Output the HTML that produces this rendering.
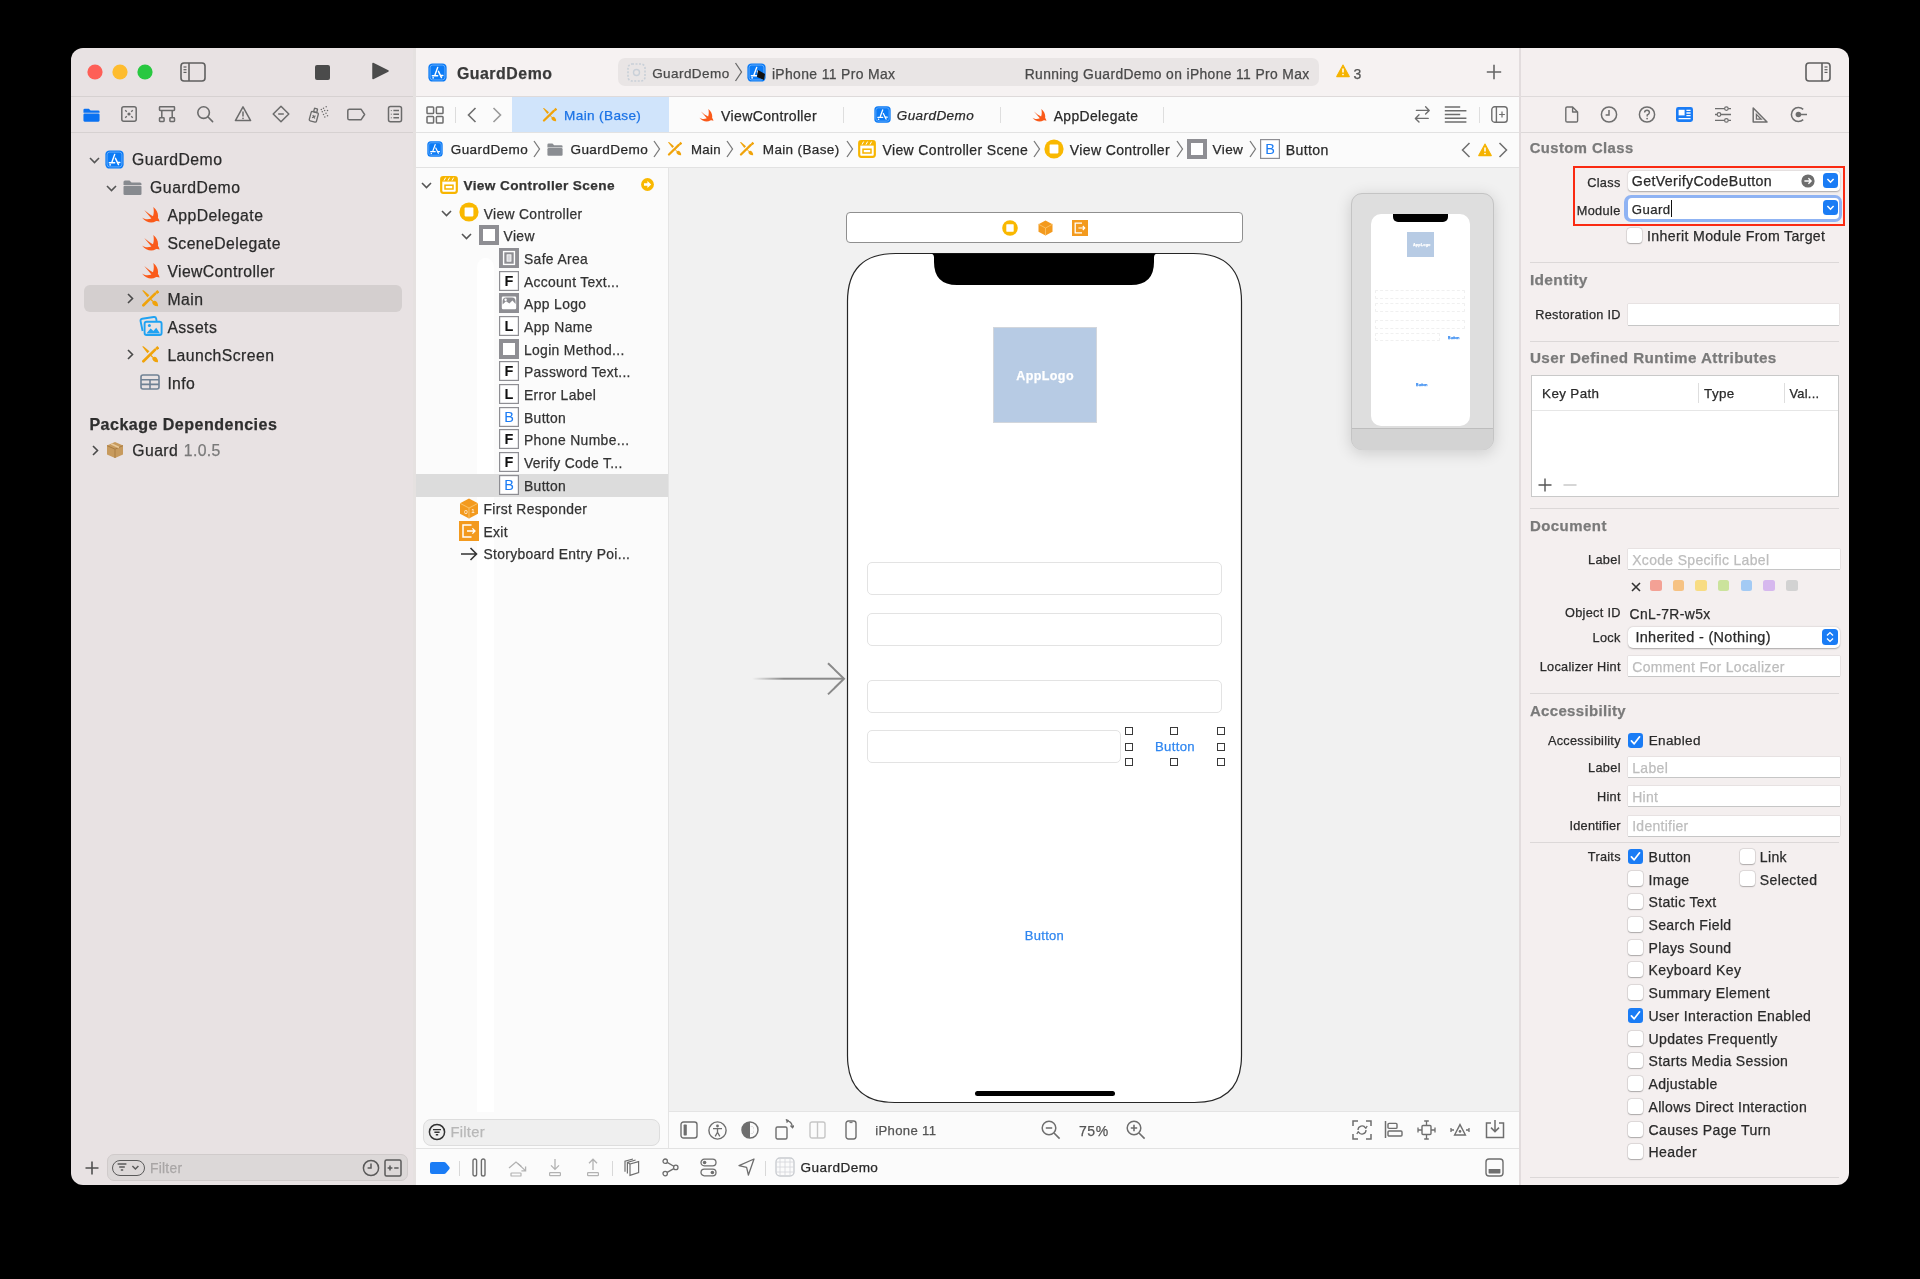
<!DOCTYPE html>
<html><head><meta charset="utf-8"><style>
html,body{margin:0;padding:0;width:1920px;height:1279px;overflow:hidden;background:#000;}
body{font-family:"Liberation Sans",sans-serif;position:relative;}
.a{position:absolute;}
.t{position:absolute;white-space:nowrap;-webkit-text-stroke:0.25px currentColor;}
#win{position:absolute;left:0;top:0;width:1920px;height:1279px;will-change:transform;clip-path:inset(48px 71px 94px 71px round 12px);}
</style></head><body><div id="win">
<div class="a" style="left:71px;top:48px;width:345px;height:1137px;background:#e8e2e3;"></div>
<div class="a" style="left:416px;top:48px;width:1433px;height:48px;background:#f6f2f2;"></div>
<div class="a" style="left:1519px;top:48px;width:330px;height:1137px;background:#f4efef;"></div>
<div class="a" style="left:416px;top:96px;width:1103px;height:1089px;background:#fbfbfb;"></div>
<div class="a" style="left:669px;top:168px;width:850px;height:944px;background:#f1f1f1;"></div>
<div class="a" style="left:71px;top:96px;width:345px;height:1px;background:#d6d1d1;"></div>
<div class="a" style="left:71px;top:132px;width:345px;height:1px;background:#d6d1d1;"></div>
<div class="a" style="left:416px;top:96px;width:1433px;height:1px;background:#dedada;"></div>
<div class="a" style="left:416px;top:132px;width:1103px;height:1px;background:#e2e2e2;"></div>
<div class="a" style="left:416px;top:167px;width:1103px;height:1px;background:#e2e2e2;"></div>
<div class="a" style="left:1519px;top:132px;width:330px;height:1px;background:#dcd8d8;"></div>
<div class="a" style="left:1519px;top:48px;width:2px;height:1137px;background:#e2dcdd;"></div>
<div class="a" style="left:413px;top:48px;width:3px;height:1137px;background:#e5e1e0;"></div>
<div class="a" style="left:668px;top:168px;width:1px;height:980px;background:#e4e4e4;"></div>
<div class="a" style="left:669px;top:1111px;width:850px;height:1px;background:#e4e4e4;"></div>
<div class="a" style="left:416px;top:1148px;width:1103px;height:1px;background:#e2e2e2;"></div>
<svg class="a" style="left:87px;top:64px;" width="16" height="16" viewBox="0 0 16 16"><circle cx="8" cy="8" r="7.6" fill="#fe5f57"/></svg>
<svg class="a" style="left:112px;top:64px;" width="16" height="16" viewBox="0 0 16 16"><circle cx="8" cy="8" r="7.6" fill="#febc2e"/></svg>
<svg class="a" style="left:137px;top:64px;" width="16" height="16" viewBox="0 0 16 16"><circle cx="8" cy="8" r="7.6" fill="#28c840"/></svg>
<svg class="a" style="left:180px;top:62px;" width="26" height="20" viewBox="0 0 26 20"><rect x="1" y="1" width="24" height="18" rx="3" fill="none" stroke="#5f5f5f" stroke-width="1.6"/><line x1="9" y1="1" x2="9" y2="19" stroke="#5f5f5f" stroke-width="1.6"/><line x1="3.5" y1="5" x2="6.5" y2="5" stroke="#5f5f5f" stroke-width="1.2"/><line x1="3.5" y1="7.7" x2="6.5" y2="7.7" stroke="#5f5f5f" stroke-width="1.2"/><line x1="3.5" y1="10.4" x2="6.5" y2="10.4" stroke="#5f5f5f" stroke-width="1.2"/></svg>
<div class="a" style="left:315px;top:65px;width:15px;height:15px;background:#4b4b4b;border-radius:2px;"></div>
<svg class="a" style="left:372px;top:62px;" width="17" height="18" viewBox="0 0 17 18"><path d="M1 1.5 L16 9 L1 16.5 Z" fill="#4b4b4b" stroke="#4b4b4b" stroke-width="1.5" stroke-linejoin="round"/></svg>
<svg class="a" style="left:428px;top:63px;" width="19" height="19" viewBox="0 0 20 20"><rect x="0.4" y="0.4" width="19.2" height="19.2" rx="4.4" fill="#0b7bf6"/><rect x="2.2" y="2.2" width="15.6" height="15.6" rx="2.8" fill="none" stroke="#7ab6fb" stroke-width="0.8"/><g stroke="#fff" stroke-width="1.5" stroke-linecap="round" fill="none"><path d="M10.2 4.6 L7.4 12.4"/><path d="M4.6 13.4 H10.2"/><path d="M11 8.8 L14.2 15.4"/><path d="M13.4 13.2 H15.6"/></g><circle cx="5.4" cy="15.6" r="0.9" fill="#fff"/></svg>
<div class="t" style="left:456.90px;top:63.00px;font-size:15.89px;line-height:21px;color:#3a3a3a;font-weight:bold;letter-spacing:0.532px;">GuardDemo</div>
<div class="a" style="left:618px;top:58px;width:701px;height:28px;background:#e9e5e5;border-radius:7px;"></div>
<svg class="a" style="left:627px;top:63px;" width="19" height="19" viewBox="0 0 19 19"><rect x="1" y="1" width="17" height="17" rx="4" fill="none" stroke="#c9d0d8" stroke-width="1.6" stroke-dasharray="2 1.5"/><circle cx="9.5" cy="9.5" r="3" fill="none" stroke="#c9d0d8" stroke-width="1.4"/></svg>
<div class="t" style="left:652.20px;top:65.00px;font-size:13.50px;line-height:18px;color:#4a4a4a;letter-spacing:0.43px;">GuardDemo</div>
<svg class="a" style="left:734px;top:62px;" width="9" height="20" viewBox="0 0 9 20"><path d="M1.5 1 L7.5 10 L1.5 19" fill="none" stroke="#6a6a6a" stroke-width="1.3"/></svg>
<svg class="a" style="left:747px;top:63px;" width="19" height="19" viewBox="0 0 20 20"><rect x="0.4" y="0.4" width="19.2" height="19.2" rx="4.4" fill="#0b7bf6"/><rect x="2.2" y="2.2" width="15.6" height="15.6" rx="2.8" fill="none" stroke="#7ab6fb" stroke-width="0.8"/><g stroke="#fff" stroke-width="1.5" stroke-linecap="round" fill="none"><path d="M10.2 4.6 L7.4 12.4"/><path d="M4.6 13.4 H10.2"/><path d="M11 8.8 L14.2 15.4"/><path d="M13.4 13.2 H15.6"/></g><circle cx="5.4" cy="15.6" r="0.9" fill="#fff"/></svg>
<svg class="a" style="left:755px;top:68px;" width="13" height="14" viewBox="0 0 13 14"><path d="M3 2 L10 6 L9 12 L2 9 Z" fill="#111"/></svg>
<div class="t" style="left:771.90px;top:65.00px;font-size:13.93px;line-height:18px;color:#4a4a4a;letter-spacing:0.364px;">iPhone 11 Pro Max</div>
<div class="t" style="left:1024.70px;top:65.00px;font-size:13.85px;line-height:18px;color:#4a4a4a;letter-spacing:0.375px;">Running GuardDemo on iPhone 11 Pro Max</div>
<svg class="a" style="left:1336px;top:64px;" width="14" height="14" viewBox="0 0 20 20"><path d="M10 1.5 L19 18 H1 Z" fill="#f5b300" stroke="#f5b300" stroke-width="1.5" stroke-linejoin="round"/><path d="M10 6.5 V12" stroke="#fff" stroke-width="2.2"/><circle cx="10" cy="15" r="1.2" fill="#fff"/></svg>
<div class="t" style="left:1353.60px;top:65.00px;font-size:14.00px;line-height:18px;color:#555;">3</div>
<svg class="a" style="left:1486px;top:64px;" width="16" height="16" viewBox="0 0 16 16"><path d="M8 0.8 V15.2 M0.8 8 H15.2" stroke="#666" stroke-width="1.6"/></svg>
<svg class="a" style="left:1805px;top:62px;" width="26" height="20" viewBox="0 0 26 20"><rect x="1" y="1" width="24" height="18" rx="3" fill="none" stroke="#5f5f5f" stroke-width="1.6"/><line x1="17" y1="1" x2="17" y2="19" stroke="#5f5f5f" stroke-width="1.6"/><line x1="19.5" y1="5" x2="22.5" y2="5" stroke="#5f5f5f" stroke-width="1.2"/><line x1="19.5" y1="7.7" x2="22.5" y2="7.7" stroke="#5f5f5f" stroke-width="1.2"/><line x1="19.5" y1="10.4" x2="22.5" y2="10.4" stroke="#5f5f5f" stroke-width="1.2"/></svg>
<svg class="a" style="left:83px;top:108px;" width="17" height="14" viewBox="0 0 19 15"><path d="M0.5 2 Q0.5 0.5 2 0.5 H6.5 L8.5 2.5 H17 Q18.5 2.5 18.5 4 V5 H0.5 Z" fill="#0a72f2"/><rect x="0.5" y="5.8" width="18" height="9.2" rx="1.3" fill="#0a72f2"/></svg>
<svg class="a" style="left:120px;top:105px;" width="18" height="18" viewBox="0 0 18 18"><rect x="1.8" y="1.8" width="14.4" height="14.4" rx="2" fill="none" stroke="#6b6b6b" stroke-width="1.5"/><circle cx="9" cy="9" r="1.6" fill="#6b6b6b"/><path d="M5.2 5.2 L6.8 6.8 M12.8 5.2 L11.2 6.8 M5.2 12.8 L6.8 11.2 M12.8 12.8 L11.2 11.2" stroke="#6b6b6b" stroke-width="1.3"/></svg>
<svg class="a" style="left:158px;top:105px;" width="18" height="18" viewBox="0 0 18 18"><g fill="none" stroke="#6b6b6b" stroke-width="1.5"><rect x="1.5" y="1.8" width="15" height="3.6" rx="0.6"/><rect x="1.5" y="12.8" width="4.6" height="3.6" rx="0.6"/><rect x="11.9" y="12.8" width="4.6" height="3.6" rx="0.6"/><path d="M3.8 5.4 V12.8 M14.2 5.4 V12.8"/></g></svg>
<svg class="a" style="left:196px;top:105px;" width="18" height="18" viewBox="0 0 18 18"><g fill="none" stroke="#6b6b6b" stroke-width="1.6"><circle cx="7.6" cy="7.6" r="5.8"/><path d="M11.8 11.8 L16.6 16.6" stroke-linecap="round"/></g></svg>
<svg class="a" style="left:234px;top:105px;" width="18" height="18" viewBox="0 0 18 18"><path d="M9 1.8 L16.6 15.6 H1.4 Z" fill="none" stroke="#6b6b6b" stroke-width="1.5" stroke-linejoin="round"/><path d="M9 6.6 V11.4" stroke="#6b6b6b" stroke-width="1.5"/><circle cx="9" cy="13.4" r="0.8" fill="#6b6b6b"/></svg>
<svg class="a" style="left:272px;top:105px;" width="18" height="18" viewBox="0 0 18 18"><path d="M9 1.2 L16.8 9 L9 16.8 L1.2 9 Z" fill="none" stroke="#6b6b6b" stroke-width="1.5" stroke-linejoin="round"/><path d="M6.2 9 H11.8" stroke="#6b6b6b" stroke-width="1.5"/></svg>
<svg class="a" style="left:308px;top:105px;" width="22" height="19" viewBox="0 0 22 19"><g transform="rotate(15 5.8 11.8)" fill="none" stroke="#6b6b6b" stroke-width="1.3"><rect x="2.1" y="7" width="7.4" height="9.6" rx="1.2"/><rect x="4.3" y="3.2" width="3.2" height="3.8" rx="0.6"/><path d="M4.4 10.4 L7.2 13.2 M7.2 10.4 L4.4 13.2" stroke-width="1.2"/></g><g fill="#6b6b6b"><circle cx="13.3" cy="4.4" r="0.75"/><circle cx="15.5" cy="3.2" r="0.75"/><circle cx="18.2" cy="1.8" r="0.75"/><circle cx="16.6" cy="5.6" r="0.75"/><circle cx="19.5" cy="5.6" r="0.75"/><circle cx="14.3" cy="6.8" r="0.75"/><circle cx="18" cy="8.2" r="0.75"/><circle cx="15.5" cy="9.5" r="0.75"/><circle cx="19.5" cy="10.8" r="0.75"/><circle cx="16.8" cy="12.1" r="0.75"/></g></svg>
<svg class="a" style="left:346px;top:108px;" width="20" height="13" viewBox="0 0 20 13"><path d="M1.8 2.8 Q1.8 1.2 3.4 1.2 H15 L18.6 6.5 L15 11.8 H3.4 Q1.8 11.8 1.8 10.2 Z" fill="none" stroke="#6b6b6b" stroke-width="1.5" stroke-linejoin="round"/></svg>
<svg class="a" style="left:387px;top:105px;" width="16" height="18" viewBox="0 0 16 18"><rect x="1.5" y="1.6" width="13" height="15.2" rx="2" fill="none" stroke="#6b6b6b" stroke-width="1.5"/><path d="M6.4 5.6 H12 M6.4 9.2 H12 M6.4 12.8 H12" stroke="#6b6b6b" stroke-width="1.5"/><path d="M3.8 5.6 H4.8 M3.8 9.2 H4.8 M3.8 12.8 H4.8" stroke="#6b6b6b" stroke-width="1"/></svg>
<div class="a" style="left:84px;top:285px;width:318px;height:27px;background:#d4cfcf;border-radius:6px;"></div>
<svg class="a" style="left:88.5px;top:157px;" width="11" height="7" viewBox="0 0 11 7"><path d="M1 1 L5.5 5.5 L10 1" fill="none" stroke="#555555" stroke-width="1.6"/></svg>
<svg class="a" style="left:105px;top:150px;" width="19" height="19" viewBox="0 0 20 20"><rect x="0.4" y="0.4" width="19.2" height="19.2" rx="4.4" fill="#0b7bf6"/><rect x="2.2" y="2.2" width="15.6" height="15.6" rx="2.8" fill="none" stroke="#7ab6fb" stroke-width="0.8"/><g stroke="#fff" stroke-width="1.5" stroke-linecap="round" fill="none"><path d="M10.2 4.6 L7.4 12.4"/><path d="M4.6 13.4 H10.2"/><path d="M11 8.8 L14.2 15.4"/><path d="M13.4 13.2 H15.6"/></g><circle cx="5.4" cy="15.6" r="0.9" fill="#fff"/></svg>
<div class="t" style="left:132.10px;top:149.00px;font-size:15.77px;line-height:21px;color:#2b2b2b;letter-spacing:0.502px;">GuardDemo</div>
<svg class="a" style="left:106px;top:185px;" width="11" height="7" viewBox="0 0 11 7"><path d="M1 1 L5.5 5.5 L10 1" fill="none" stroke="#555555" stroke-width="1.6"/></svg>
<svg class="a" style="left:123px;top:180px;" width="19" height="15" viewBox="0 0 19 15"><path d="M0.5 2 Q0.5 0.5 2 0.5 H6.5 L8.5 2.5 H17 Q18.5 2.5 18.5 4 V5 H0.5 Z" fill="#878a8f"/><rect x="0.5" y="5.8" width="18" height="9.2" rx="1.3" fill="#878a8f"/></svg>
<div class="t" style="left:150.10px;top:177.00px;font-size:15.77px;line-height:21px;color:#2b2b2b;letter-spacing:0.502px;">GuardDemo</div>
<svg class="a" style="left:142px;top:207px;" width="18" height="16" viewBox="0 0 18 16"><path d="M0 10.4 C2.5 12.4 6 12.8 9.4 11.4 L2.2 3 C5.2 5.6 8.2 7.8 11 9.2 C12 6.4 12 3 11.3 0 C15 3 16.6 7 15.9 10.8 C16.7 11.9 17.3 13.1 17.6 14.6 C16.2 14 14.9 13.8 13.7 14.2 C10 16.4 4 15.8 0 10.4 Z" fill="#fa5a1a"/></svg>
<div class="t" style="left:167.40px;top:205.00px;font-size:15.77px;line-height:21px;color:#2b2b2b;letter-spacing:0.436px;">AppDelegate</div>
<svg class="a" style="left:142px;top:235px;" width="18" height="16" viewBox="0 0 18 16"><path d="M0 10.4 C2.5 12.4 6 12.8 9.4 11.4 L2.2 3 C5.2 5.6 8.2 7.8 11 9.2 C12 6.4 12 3 11.3 0 C15 3 16.6 7 15.9 10.8 C16.7 11.9 17.3 13.1 17.6 14.6 C16.2 14 14.9 13.8 13.7 14.2 C10 16.4 4 15.8 0 10.4 Z" fill="#fa5a1a"/></svg>
<div class="t" style="left:167.40px;top:233.00px;font-size:15.77px;line-height:21px;color:#2b2b2b;letter-spacing:0.437px;">SceneDelegate</div>
<svg class="a" style="left:142px;top:263px;" width="18" height="16" viewBox="0 0 18 16"><path d="M0 10.4 C2.5 12.4 6 12.8 9.4 11.4 L2.2 3 C5.2 5.6 8.2 7.8 11 9.2 C12 6.4 12 3 11.3 0 C15 3 16.6 7 15.9 10.8 C16.7 11.9 17.3 13.1 17.6 14.6 C16.2 14 14.9 13.8 13.7 14.2 C10 16.4 4 15.8 0 10.4 Z" fill="#fa5a1a"/></svg>
<div class="t" style="left:167.40px;top:261.00px;font-size:15.77px;line-height:21px;color:#2b2b2b;letter-spacing:0.384px;">ViewController</div>
<svg class="a" style="left:126.5px;top:292.5px;" width="7" height="11" viewBox="0 0 7 11"><path d="M1 1 L5.5 5.5 L1 10" fill="none" stroke="#4a4a4a" stroke-width="1.6"/></svg>
<svg class="a" style="left:141px;top:289px;" width="18" height="18" viewBox="0 0 18 18"><path d="M2.4 16.2 L14.2 4.6" stroke="#f0a30a" stroke-width="2.7" stroke-linecap="round"/><rect x="14.9" y="1.6" width="2.8" height="2.8" fill="#f0a30a" transform="rotate(45 16.3 3)"/><path d="M1.2 1.6 Q2 0.9 2.8 1.5 L8.4 6.2 L6.4 8.3 Z" fill="#f0a30a"/><path d="M8.6 9.2 L11.8 12.2" stroke="#f0a30a" stroke-width="1.2"/><path d="M11.4 12.6 Q13.6 10.8 15.6 12.8 Q17.4 15 17 17.2 Q14.4 17.4 12.6 16 Q10.8 14.4 11.4 12.6 Z" fill="#f0a30a"/></svg>
<div class="t" style="left:167.40px;top:289.00px;font-size:15.77px;line-height:21px;color:#2b2b2b;letter-spacing:0.45px;">Main</div>
<svg class="a" style="left:139px;top:316px;" width="24" height="20" viewBox="0 0 24 20"><path d="M3.6 15 L1.6 5.2 Q1.2 3.2 3.2 2.8 L14.8 1 Q16.8 0.7 17.2 2.6 L17.6 5" fill="none" stroke="#1fa2f2" stroke-width="1.9"/><rect x="5.6" y="5.8" width="17" height="13.2" rx="2" fill="#e8e2e3" stroke="#1fa2f2" stroke-width="1.9"/><path d="M7.4 17.4 L11.6 12.6 L14.4 15 L17.2 11.8 L21 17.4 Z" fill="#1fa2f2"/><circle cx="10.4" cy="9.6" r="1.5" fill="#1fa2f2"/></svg>
<div class="t" style="left:167.40px;top:317.00px;font-size:15.77px;line-height:21px;color:#2b2b2b;letter-spacing:0.415px;">Assets</div>
<svg class="a" style="left:126.5px;top:348.5px;" width="7" height="11" viewBox="0 0 7 11"><path d="M1 1 L5.5 5.5 L1 10" fill="none" stroke="#4a4a4a" stroke-width="1.6"/></svg>
<svg class="a" style="left:141px;top:345px;" width="18" height="18" viewBox="0 0 18 18"><path d="M2.4 16.2 L14.2 4.6" stroke="#f0a30a" stroke-width="2.7" stroke-linecap="round"/><rect x="14.9" y="1.6" width="2.8" height="2.8" fill="#f0a30a" transform="rotate(45 16.3 3)"/><path d="M1.2 1.6 Q2 0.9 2.8 1.5 L8.4 6.2 L6.4 8.3 Z" fill="#f0a30a"/><path d="M8.6 9.2 L11.8 12.2" stroke="#f0a30a" stroke-width="1.2"/><path d="M11.4 12.6 Q13.6 10.8 15.6 12.8 Q17.4 15 17 17.2 Q14.4 17.4 12.6 16 Q10.8 14.4 11.4 12.6 Z" fill="#f0a30a"/></svg>
<div class="t" style="left:167.40px;top:345.00px;font-size:15.77px;line-height:21px;color:#2b2b2b;letter-spacing:0.446px;">LaunchScreen</div>
<svg class="a" style="left:140px;top:374px;" width="20" height="16" viewBox="0 0 20 16"><g fill="none" stroke="#6f8194" stroke-width="1.6"><rect x="1" y="1" width="18" height="14" rx="2"/><path d="M1 5.8 H19 M1 10.4 H19 M10 5.8 V15"/></g></svg>
<div class="t" style="left:167.40px;top:373.00px;font-size:15.77px;line-height:21px;color:#2b2b2b;letter-spacing:0.346px;">Info</div>
<div class="t" style="left:89.40px;top:414.00px;font-size:16.07px;line-height:21px;color:#2e2e2e;font-weight:bold;letter-spacing:0.47px;">Package Dependencies</div>
<svg class="a" style="left:91.5px;top:445px;" width="7" height="11" viewBox="0 0 7 11"><path d="M1 1 L5.5 5.5 L1 10" fill="none" stroke="#4a4a4a" stroke-width="1.6"/></svg>
<svg class="a" style="left:106px;top:441px;" width="18" height="18" viewBox="0 0 18 18"><path d="M9 1 L17 4.6 V13.4 L9 17 L1 13.4 V4.6 Z" fill="#c79a5d"/><path d="M1 4.6 L9 8.2 L17 4.6 M9 8.2 V17" fill="none" stroke="#a97c43" stroke-width="1"/><path d="M5 2.8 L13 6.4" stroke="#e8c99a" stroke-width="1.6"/></svg>
<div class="t" style="left:132.20px;top:440.00px;font-size:15.77px;line-height:21px;color:#2b2b2b;letter-spacing:0.461px;">Guard</div>
<div class="t" style="left:183.80px;top:440.00px;font-size:15.77px;line-height:21px;color:#7a7a7a;letter-spacing:0.369px;">1.0.5</div>
<svg class="a" style="left:85px;top:1161px;" width="14" height="14" viewBox="0 0 14 14"><path d="M7 0.5 V13.5 M0.5 7 H13.5" stroke="#505050" stroke-width="1.6"/></svg>
<div class="a" style="left:107px;top:1154px;width:301px;height:27px;background:#dcd8d8;border:1px solid #d0cbcb;box-sizing:border-box;border-radius:7px;"></div>
<div class="a" style="left:112px;top:1159.5px;width:33px;height:16.5px;border:1.4px solid #5a5a5a;box-sizing:border-box;border-radius:9px;"></div>
<svg class="a" style="left:116px;top:1161px;" width="26" height="13" viewBox="0 0 26 13"><path d="M1.6 3 H10.4 M3.2 6 H8.8 M4.8 9 H7.2" stroke="#5a5a5a" stroke-width="1.4"/><path d="M16.4 5 L19.4 8 L22.4 5" fill="none" stroke="#5a5a5a" stroke-width="1.5"/></svg>
<div class="t" style="left:150.00px;top:1159.00px;font-size:13.81px;line-height:18px;color:#a9a6a6;letter-spacing:0.269px;">Filter</div>
<svg class="a" style="left:362px;top:1159px;" width="18" height="18" viewBox="0 0 18 18"><circle cx="9" cy="9" r="7.6" fill="none" stroke="#5a5a5a" stroke-width="1.5"/><path d="M9 4.4 V9 H5.6" fill="none" stroke="#5a5a5a" stroke-width="1.5"/></svg>
<svg class="a" style="left:384px;top:1159px;" width="18" height="18" viewBox="0 0 18 18"><rect x="1" y="1" width="16" height="16" rx="1.5" fill="none" stroke="#5a5a5a" stroke-width="1.5"/><path d="M3.6 9 H8.4 M6 6.6 V11.4 M10.2 9 H14.6" stroke="#5a5a5a" stroke-width="1.5"/></svg>
<svg class="a" style="left:426px;top:106px;" width="18" height="18" viewBox="0 0 18 18"><g fill="none" stroke="#6e6e6e" stroke-width="1.5"><rect x="1" y="1" width="6.6" height="6.6" rx="0.8"/><rect x="10.4" y="1" width="6.6" height="6.6" rx="0.8"/><rect x="1" y="10.4" width="6.6" height="6.6" rx="0.8"/><rect x="10.4" y="10.4" width="6.6" height="6.6" rx="0.8"/></g></svg>
<div class="a" style="left:455px;top:107px;width:1px;height:16px;background:#dcdcdc;"></div>
<svg class="a" style="left:467px;top:107px;" width="10" height="16" viewBox="0 0 10 16"><path d="M8.5 1 L1.5 8 L8.5 15" fill="none" stroke="#6e6e6e" stroke-width="1.6"/></svg>
<svg class="a" style="left:492px;top:107px;" width="10" height="16" viewBox="0 0 10 16"><path d="M1.5 1 L8.5 8 L1.5 15" fill="none" stroke="#9a9a9a" stroke-width="1.6"/></svg>
<div class="a" style="left:512px;top:97px;width:157px;height:35px;background:#d0e4fb;"></div>
<svg class="a" style="left:542px;top:107px;" width="15" height="15" viewBox="0 0 18 18"><path d="M2.4 16.2 L14.2 4.6" stroke="#f0a30a" stroke-width="2.7" stroke-linecap="round"/><rect x="14.9" y="1.6" width="2.8" height="2.8" fill="#f0a30a" transform="rotate(45 16.3 3)"/><path d="M1.2 1.6 Q2 0.9 2.8 1.5 L8.4 6.2 L6.4 8.3 Z" fill="#f0a30a"/><path d="M8.6 9.2 L11.8 12.2" stroke="#f0a30a" stroke-width="1.2"/><path d="M11.4 12.6 Q13.6 10.8 15.6 12.8 Q17.4 15 17 17.2 Q14.4 17.4 12.6 16 Q10.8 14.4 11.4 12.6 Z" fill="#f0a30a"/></svg>
<div class="t" style="left:564.10px;top:107.00px;font-size:13.60px;line-height:18px;color:#1b73e6;letter-spacing:0.351px;">Main (Base)</div>
<svg class="a" style="left:699px;top:109px;" width="15" height="13" viewBox="0 0 18 16"><path d="M0 10.4 C2.5 12.4 6 12.8 9.4 11.4 L2.2 3 C5.2 5.6 8.2 7.8 11 9.2 C12 6.4 12 3 11.3 0 C15 3 16.6 7 15.9 10.8 C16.7 11.9 17.3 13.1 17.6 14.6 C16.2 14 14.9 13.8 13.7 14.2 C10 16.4 4 15.8 0 10.4 Z" fill="#fa5a1a"/></svg>
<div class="t" style="left:721.10px;top:107.00px;font-size:14.06px;line-height:18px;color:#2a2a2a;letter-spacing:0.343px;">ViewController</div>
<div class="a" style="left:843px;top:107px;width:1px;height:16px;background:#dedede;"></div>
<svg class="a" style="left:874px;top:106px;" width="17" height="17" viewBox="0 0 20 20"><rect x="0.4" y="0.4" width="19.2" height="19.2" rx="4.4" fill="#0b7bf6"/><rect x="2.2" y="2.2" width="15.6" height="15.6" rx="2.8" fill="none" stroke="#7ab6fb" stroke-width="0.8"/><g stroke="#fff" stroke-width="1.5" stroke-linecap="round" fill="none"><path d="M10.2 4.6 L7.4 12.4"/><path d="M4.6 13.4 H10.2"/><path d="M11 8.8 L14.2 15.4"/><path d="M13.4 13.2 H15.6"/></g><circle cx="5.4" cy="15.6" r="0.9" fill="#fff"/></svg>
<div class="t" style="left:896.70px;top:107.00px;font-size:13.53px;line-height:18px;color:#2a2a2a;font-style:italic;letter-spacing:0.431px;">GuardDemo</div>
<div class="a" style="left:1000px;top:107px;width:1px;height:16px;background:#dedede;"></div>
<svg class="a" style="left:1032px;top:109px;" width="15" height="13" viewBox="0 0 18 16"><path d="M0 10.4 C2.5 12.4 6 12.8 9.4 11.4 L2.2 3 C5.2 5.6 8.2 7.8 11 9.2 C12 6.4 12 3 11.3 0 C15 3 16.6 7 15.9 10.8 C16.7 11.9 17.3 13.1 17.6 14.6 C16.2 14 14.9 13.8 13.7 14.2 C10 16.4 4 15.8 0 10.4 Z" fill="#fa5a1a"/></svg>
<div class="t" style="left:1053.70px;top:107.00px;font-size:13.90px;line-height:18px;color:#2a2a2a;letter-spacing:0.385px;">AppDelegate</div>
<div class="a" style="left:1163px;top:107px;width:1px;height:16px;background:#dedede;"></div>
<svg class="a" style="left:1413px;top:105px;" width="19" height="19" viewBox="0 0 19 19"><g fill="none" stroke="#6e6e6e" stroke-width="1.4" stroke-linecap="round" stroke-linejoin="round"><path d="M3.4 5.4 H16.2 M12.6 1.8 L16.2 5.4 L12.6 9"/><path d="M15.2 13.4 H2.4 M6 9.8 L2.4 13.4 L6 17"/></g></svg>
<svg class="a" style="left:1444px;top:106px;" width="23" height="17" viewBox="0 0 23 17"><path d="M0.8 1 H16.2 M0.8 4.8 H22.4 M0.8 8.5 H16.2 M0.8 12.3 H22.4 M0.8 16 H22.4" stroke="#6e6e6e" stroke-width="1.4"/></svg>
<div class="a" style="left:1479px;top:107px;width:1px;height:16px;background:#dedede;"></div>
<svg class="a" style="left:1491px;top:106px;" width="17" height="17" viewBox="0 0 17 17"><rect x="0.8" y="0.8" width="15.4" height="15.4" rx="2.8" fill="none" stroke="#6e6e6e" stroke-width="1.4"/><path d="M5.4 0.8 V16.2" stroke="#6e6e6e" stroke-width="1.4"/><path d="M11 5.6 V11.4 M8.1 8.5 H13.9" stroke="#6e6e6e" stroke-width="1.2"/></svg>
<svg class="a" style="left:427px;top:141px;" width="16" height="16" viewBox="0 0 20 20"><rect x="0.4" y="0.4" width="19.2" height="19.2" rx="4.4" fill="#0b7bf6"/><rect x="2.2" y="2.2" width="15.6" height="15.6" rx="2.8" fill="none" stroke="#7ab6fb" stroke-width="0.8"/><g stroke="#fff" stroke-width="1.5" stroke-linecap="round" fill="none"><path d="M10.2 4.6 L7.4 12.4"/><path d="M4.6 13.4 H10.2"/><path d="M11 8.8 L14.2 15.4"/><path d="M13.4 13.2 H15.6"/></g><circle cx="5.4" cy="15.6" r="0.9" fill="#fff"/></svg>
<div class="t" style="left:450.70px;top:141.00px;font-size:13.52px;line-height:18px;color:#2a2a2a;letter-spacing:0.431px;">GuardDemo</div>
<svg class="a" style="left:533px;top:140px;" width="8" height="18" viewBox="0 0 8 18"><path d="M1 1 L6.5 9 L1 17" fill="none" stroke="#7a7a7a" stroke-width="1.3"/></svg>
<svg class="a" style="left:547px;top:143px;" width="16" height="13" viewBox="0 0 19 15"><path d="M0.5 2 Q0.5 0.5 2 0.5 H6.5 L8.5 2.5 H17 Q18.5 2.5 18.5 4 V5 H0.5 Z" fill="#8a8d92"/><rect x="0.5" y="5.8" width="18" height="9.2" rx="1.3" fill="#8a8d92"/></svg>
<div class="t" style="left:570.40px;top:141.00px;font-size:13.59px;line-height:18px;color:#2a2a2a;letter-spacing:0.433px;">GuardDemo</div>
<svg class="a" style="left:653px;top:140px;" width="8" height="18" viewBox="0 0 8 18"><path d="M1 1 L6.5 9 L1 17" fill="none" stroke="#7a7a7a" stroke-width="1.3"/></svg>
<svg class="a" style="left:667px;top:141px;" width="15" height="15" viewBox="0 0 18 18"><path d="M2.4 16.2 L14.2 4.6" stroke="#f0a30a" stroke-width="2.7" stroke-linecap="round"/><rect x="14.9" y="1.6" width="2.8" height="2.8" fill="#f0a30a" transform="rotate(45 16.3 3)"/><path d="M1.2 1.6 Q2 0.9 2.8 1.5 L8.4 6.2 L6.4 8.3 Z" fill="#f0a30a"/><path d="M8.6 9.2 L11.8 12.2" stroke="#f0a30a" stroke-width="1.2"/><path d="M11.4 12.6 Q13.6 10.8 15.6 12.8 Q17.4 15 17 17.2 Q14.4 17.4 12.6 16 Q10.8 14.4 11.4 12.6 Z" fill="#f0a30a"/></svg>
<div class="t" style="left:690.90px;top:141.00px;font-size:13.24px;line-height:17px;color:#2a2a2a;letter-spacing:0.377px;">Main</div>
<svg class="a" style="left:725.5px;top:140px;" width="8" height="18" viewBox="0 0 8 18"><path d="M1 1 L6.5 9 L1 17" fill="none" stroke="#7a7a7a" stroke-width="1.3"/></svg>
<svg class="a" style="left:739px;top:141px;" width="15" height="15" viewBox="0 0 18 18"><path d="M2.4 16.2 L14.2 4.6" stroke="#f0a30a" stroke-width="2.7" stroke-linecap="round"/><rect x="14.9" y="1.6" width="2.8" height="2.8" fill="#f0a30a" transform="rotate(45 16.3 3)"/><path d="M1.2 1.6 Q2 0.9 2.8 1.5 L8.4 6.2 L6.4 8.3 Z" fill="#f0a30a"/><path d="M8.6 9.2 L11.8 12.2" stroke="#f0a30a" stroke-width="1.2"/><path d="M11.4 12.6 Q13.6 10.8 15.6 12.8 Q17.4 15 17 17.2 Q14.4 17.4 12.6 16 Q10.8 14.4 11.4 12.6 Z" fill="#f0a30a"/></svg>
<div class="t" style="left:762.80px;top:141.00px;font-size:13.53px;line-height:18px;color:#2a2a2a;letter-spacing:0.349px;">Main (Base)</div>
<svg class="a" style="left:846px;top:140px;" width="8" height="18" viewBox="0 0 8 18"><path d="M1 1 L6.5 9 L1 17" fill="none" stroke="#7a7a7a" stroke-width="1.3"/></svg>
<svg class="a" style="left:858px;top:140px;" width="18" height="18" viewBox="0 0 18 18"><rect x="1.2" y="1.2" width="15.6" height="15.6" rx="2" fill="#fff" stroke="#f7b500" stroke-width="2.2"/><rect x="1" y="1" width="16" height="4.6" fill="#f7b500"/><path d="M4 4.6 L5.6 1.6 M8 4.6 L9.6 1.6 M12 4.6 L13.6 1.6" stroke="#fff" stroke-width="1"/><rect x="5" y="9.2" width="8" height="3.8" fill="none" stroke="#f7b500" stroke-width="1.5"/></svg>
<div class="t" style="left:882.60px;top:141.00px;font-size:14.01px;line-height:18px;color:#2a2a2a;letter-spacing:0.347px;">View Controller Scene</div>
<svg class="a" style="left:1032.5px;top:140px;" width="8" height="18" viewBox="0 0 8 18"><path d="M1 1 L6.5 9 L1 17" fill="none" stroke="#7a7a7a" stroke-width="1.3"/></svg>
<svg class="a" style="left:1044px;top:139px;" width="20" height="20" viewBox="0 0 20 20"><circle cx="10" cy="10" r="9.6" fill="#f9b800"/><rect x="5.6" y="5.6" width="8.8" height="8.8" rx="0.8" fill="#fff"/></svg>
<div class="t" style="left:1069.80px;top:141.00px;font-size:14.09px;line-height:18px;color:#2a2a2a;letter-spacing:0.334px;">View Controller</div>
<svg class="a" style="left:1176px;top:140px;" width="8" height="18" viewBox="0 0 8 18"><path d="M1 1 L6.5 9 L1 17" fill="none" stroke="#7a7a7a" stroke-width="1.3"/></svg>
<svg class="a" style="left:1187px;top:139px;" width="20" height="20" viewBox="0 0 20 20"><rect x="0" y="0" width="20" height="20" fill="#8e8e93"/><rect x="4" y="4" width="12" height="12" fill="#fff"/></svg>
<div class="t" style="left:1212.60px;top:141.00px;font-size:13.57px;line-height:18px;color:#2a2a2a;letter-spacing:0.384px;">View</div>
<svg class="a" style="left:1248.5px;top:140px;" width="8" height="18" viewBox="0 0 8 18"><path d="M1 1 L6.5 9 L1 17" fill="none" stroke="#7a7a7a" stroke-width="1.3"/></svg>
<svg class="a" style="left:1260px;top:139px;" width="20" height="20" viewBox="0 0 20 20"><rect x="0.6" y="0.6" width="18.8" height="18.8" fill="#fff" stroke="#8e8e93" stroke-width="1.2"/><text x="10" y="15.4" text-anchor="middle" font-family="Liberation Sans" font-size="14.5" font-weight="normal" fill="#1a7cf5">B</text></svg>
<div class="t" style="left:1285.70px;top:141.00px;font-size:14.13px;line-height:18px;color:#2a2a2a;letter-spacing:0.358px;">Button</div>
<svg class="a" style="left:1461px;top:142px;" width="10" height="16" viewBox="0 0 10 16"><path d="M8.5 1 L1.5 8 L8.5 15" fill="none" stroke="#6e6e6e" stroke-width="1.5"/></svg>
<svg class="a" style="left:1478px;top:143px;" width="14" height="14" viewBox="0 0 20 20"><path d="M10 1.5 L19 18 H1 Z" fill="#f5b300" stroke="#f5b300" stroke-width="1.5" stroke-linejoin="round"/><path d="M10 6.5 V12" stroke="#fff" stroke-width="2.2"/><circle cx="10" cy="15" r="1.2" fill="#fff"/></svg>
<svg class="a" style="left:1498px;top:142px;" width="10" height="16" viewBox="0 0 10 16"><path d="M1.5 1 L8.5 8 L1.5 15" fill="none" stroke="#6e6e6e" stroke-width="1.5"/></svg>
<div class="a" style="left:477px;top:258px;width:17px;height:854px;background:#ffffff;border-radius:9px 9px 0 0;"></div>
<div class="a" style="left:416px;top:474px;width:252px;height:23px;background:#dcdcdc;"></div>
<svg class="a" style="left:421px;top:182px;" width="11" height="7" viewBox="0 0 11 7"><path d="M1 1 L5.5 5.5 L10 1" fill="none" stroke="#555555" stroke-width="1.6"/></svg>
<svg class="a" style="left:440px;top:176px;" width="18" height="18" viewBox="0 0 18 18"><rect x="1.2" y="1.2" width="15.6" height="15.6" rx="2" fill="#fff" stroke="#f7b500" stroke-width="2.2"/><rect x="1" y="1" width="16" height="4.6" fill="#f7b500"/><path d="M4 4.6 L5.6 1.6 M8 4.6 L9.6 1.6 M12 4.6 L13.6 1.6" stroke="#fff" stroke-width="1"/><rect x="5" y="9.2" width="8" height="3.8" fill="none" stroke="#f7b500" stroke-width="1.5"/></svg>
<div class="t" style="left:463.50px;top:177.00px;font-size:13.65px;line-height:18px;color:#333;font-weight:bold;letter-spacing:0.361px;">View Controller Scene</div>
<svg class="a" style="left:641px;top:178px;" width="13" height="13" viewBox="0 0 13 13"><circle cx="6.5" cy="6.5" r="6.4" fill="#f9b800"/><path d="M3 5.2 H6.4 V3 L10.2 6.5 L6.4 10 V7.8 H3 Z" fill="#fff"/></svg>
<svg class="a" style="left:441px;top:210px;" width="11" height="7" viewBox="0 0 11 7"><path d="M1 1 L5.5 5.5 L10 1" fill="none" stroke="#555555" stroke-width="1.6"/></svg>
<svg class="a" style="left:459px;top:202px;" width="20" height="20" viewBox="0 0 20 20"><circle cx="10" cy="10" r="9.6" fill="#f9b800"/><rect x="5.6" y="5.6" width="8.8" height="8.8" rx="0.8" fill="#fff"/></svg>
<div class="t" style="left:483.75px;top:205.00px;font-size:13.87px;line-height:18px;color:#333333;letter-spacing:0.329px;">View Controller</div>
<svg class="a" style="left:461px;top:233px;" width="11" height="7" viewBox="0 0 11 7"><path d="M1 1 L5.5 5.5 L10 1" fill="none" stroke="#555555" stroke-width="1.6"/></svg>
<svg class="a" style="left:479px;top:225px;" width="20" height="20" viewBox="0 0 20 20"><rect x="0" y="0" width="20" height="20" fill="#8e8e93"/><rect x="4" y="4" width="12" height="12" fill="#fff"/></svg>
<div class="t" style="left:503.50px;top:227.00px;font-size:13.87px;line-height:18px;color:#333333;letter-spacing:0.392px;">View</div>
<svg class="a" style="left:499px;top:248px;" width="20" height="20" viewBox="0 0 20 20"><rect width="20" height="20" fill="#8e8e93"/><rect x="4.6" y="3.6" width="10.8" height="12.8" fill="none" stroke="#fff" stroke-width="1.4"/><rect x="8" y="6.8" width="4" height="6.4" fill="#d8d8dc" stroke="#fff" stroke-width="0.8"/></svg>
<div class="t" style="left:524.00px;top:250.00px;font-size:13.87px;line-height:18px;color:#333333;letter-spacing:0.356px;">Safe Area</div>
<svg class="a" style="left:499px;top:271px;" width="20" height="20" viewBox="0 0 20 20"><rect x="0.6" y="0.6" width="18.8" height="18.8" fill="#fff" stroke="#8e8e93" stroke-width="1.2"/><text x="10" y="15.4" text-anchor="middle" font-family="Liberation Sans" font-size="14.5" font-weight="bold" fill="#111">F</text></svg>
<div class="t" style="left:524.00px;top:273.00px;font-size:13.87px;line-height:18px;color:#333333;letter-spacing:0.318px;">Account Text...</div>
<svg class="a" style="left:499px;top:293px;" width="20" height="20" viewBox="0 0 20 20"><rect width="20" height="20" fill="#8e8e93"/><rect x="2.8" y="3.6" width="14.4" height="12.6" rx="1.2" fill="#fff"/><path d="M3.6 11.6 L7 8.2 L10.4 10.6 L13.4 7.6 L16.6 11 V8.4 Q16.6 4.4 13 4.4 H7 Q3.6 4.4 3.6 8.4 Z" fill="#8e8e93"/><circle cx="6.6" cy="6.8" r="1.2" fill="#fff"/></svg>
<div class="t" style="left:524.00px;top:295.00px;font-size:13.87px;line-height:18px;color:#333333;letter-spacing:0.391px;">App Logo</div>
<svg class="a" style="left:499px;top:316px;" width="20" height="20" viewBox="0 0 20 20"><rect x="0.6" y="0.6" width="18.8" height="18.8" fill="#fff" stroke="#8e8e93" stroke-width="1.2"/><text x="10" y="15.4" text-anchor="middle" font-family="Liberation Sans" font-size="14.5" font-weight="bold" fill="#111">L</text></svg>
<div class="t" style="left:524.00px;top:318.00px;font-size:13.87px;line-height:18px;color:#333333;letter-spacing:0.431px;">App Name</div>
<svg class="a" style="left:499px;top:339px;" width="20" height="20" viewBox="0 0 20 20"><rect x="0" y="0" width="20" height="20" fill="#8e8e93"/><rect x="4" y="4" width="12" height="12" fill="#fff"/></svg>
<div class="t" style="left:524.00px;top:341.00px;font-size:13.87px;line-height:18px;color:#333333;letter-spacing:0.335px;">Login Method...</div>
<svg class="a" style="left:499px;top:361px;" width="20" height="20" viewBox="0 0 20 20"><rect x="0.6" y="0.6" width="18.8" height="18.8" fill="#fff" stroke="#8e8e93" stroke-width="1.2"/><text x="10" y="15.4" text-anchor="middle" font-family="Liberation Sans" font-size="14.5" font-weight="bold" fill="#111">F</text></svg>
<div class="t" style="left:524.00px;top:363.00px;font-size:13.87px;line-height:18px;color:#333333;letter-spacing:0.334px;">Password Text...</div>
<svg class="a" style="left:499px;top:384px;" width="20" height="20" viewBox="0 0 20 20"><rect x="0.6" y="0.6" width="18.8" height="18.8" fill="#fff" stroke="#8e8e93" stroke-width="1.2"/><text x="10" y="15.4" text-anchor="middle" font-family="Liberation Sans" font-size="14.5" font-weight="bold" fill="#111">L</text></svg>
<div class="t" style="left:524.00px;top:386.00px;font-size:13.87px;line-height:18px;color:#333333;letter-spacing:0.328px;">Error Label</div>
<svg class="a" style="left:499px;top:407px;" width="20" height="20" viewBox="0 0 20 20"><rect x="0.6" y="0.6" width="18.8" height="18.8" fill="#fff" stroke="#8e8e93" stroke-width="1.2"/><text x="10" y="15.4" text-anchor="middle" font-family="Liberation Sans" font-size="14.5" font-weight="normal" fill="#1a7cf5">B</text></svg>
<div class="t" style="left:524.00px;top:409.00px;font-size:13.87px;line-height:18px;color:#333333;letter-spacing:0.352px;">Button</div>
<svg class="a" style="left:499px;top:429px;" width="20" height="20" viewBox="0 0 20 20"><rect x="0.6" y="0.6" width="18.8" height="18.8" fill="#fff" stroke="#8e8e93" stroke-width="1.2"/><text x="10" y="15.4" text-anchor="middle" font-family="Liberation Sans" font-size="14.5" font-weight="bold" fill="#111">F</text></svg>
<div class="t" style="left:524.00px;top:431.00px;font-size:13.87px;line-height:18px;color:#333333;letter-spacing:0.377px;">Phone Numbe...</div>
<svg class="a" style="left:499px;top:452px;" width="20" height="20" viewBox="0 0 20 20"><rect x="0.6" y="0.6" width="18.8" height="18.8" fill="#fff" stroke="#8e8e93" stroke-width="1.2"/><text x="10" y="15.4" text-anchor="middle" font-family="Liberation Sans" font-size="14.5" font-weight="bold" fill="#111">F</text></svg>
<div class="t" style="left:524.00px;top:454.00px;font-size:13.87px;line-height:18px;color:#333333;letter-spacing:0.309px;">Verify Code T...</div>
<svg class="a" style="left:499px;top:475px;" width="20" height="20" viewBox="0 0 20 20"><rect x="0.6" y="0.6" width="18.8" height="18.8" fill="#fff" stroke="#8e8e93" stroke-width="1.2"/><text x="10" y="15.4" text-anchor="middle" font-family="Liberation Sans" font-size="14.5" font-weight="normal" fill="#1a7cf5">B</text></svg>
<div class="t" style="left:524.00px;top:477.00px;font-size:13.87px;line-height:18px;color:#333333;letter-spacing:0.352px;">Button</div>
<svg class="a" style="left:459px;top:498px;" width="20" height="21" viewBox="0 0 20 21"><path d="M10 0.6 L19 5.3 V15.7 L10 20.4 L1 15.7 V5.3 Z" fill="#f39a1e"/><path d="M1 5.3 L10 10 L19 5.3 M10 10 V20.4" fill="none" stroke="#fbc66f" stroke-width="0.9"/><text x="5.2" y="16" font-size="6" font-family="Liberation Sans" fill="#fff">0</text><text x="12.2" y="15" font-size="6" font-family="Liberation Sans" fill="#fff">1</text></svg>
<div class="t" style="left:483.50px;top:500.00px;font-size:13.87px;line-height:18px;color:#333333;letter-spacing:0.346px;">First Responder</div>
<svg class="a" style="left:459px;top:521px;" width="20" height="20" viewBox="0 0 20 20"><rect width="20" height="20" fill="#f39a1e"/><path d="M12.5 4 H4 V16 H12.5" fill="none" stroke="#fff" stroke-width="1.5"/><path d="M8 10 H16 M13.4 7.4 L16 10 L13.4 12.6" fill="none" stroke="#fff" stroke-width="1.3"/></svg>
<div class="t" style="left:483.50px;top:523.00px;font-size:13.87px;line-height:18px;color:#333333;letter-spacing:0.304px;">Exit</div>
<svg class="a" style="left:460px;top:547px;" width="18" height="14" viewBox="0 0 18 14"><path d="M1 7 H16.5 M10.5 1 L16.5 7 L10.5 13" fill="none" stroke="#333" stroke-width="1.6"/></svg>
<div class="t" style="left:483.50px;top:545.00px;font-size:13.87px;line-height:18px;color:#333333;letter-spacing:0.319px;">Storyboard Entry Poi...</div>
<div class="a" style="left:423px;top:1119px;width:237px;height:27px;background:#efefef;border:1px solid #dddddd;box-sizing:border-box;border-radius:8px;"></div>
<svg class="a" style="left:428px;top:1123px;" width="18" height="18" viewBox="0 0 18 18"><circle cx="9" cy="9" r="7.6" fill="none" stroke="#333" stroke-width="1.5"/><path d="M5 6.6 H13 M6.4 9.2 H11.6 M7.8 11.8 H10.2" stroke="#333" stroke-width="1.4"/></svg>
<div class="t" style="left:450.40px;top:1123.00px;font-size:14.72px;line-height:19px;color:#b8b8b8;letter-spacing:0.287px;">Filter</div>
<div class="a" style="left:846px;top:212px;width:397px;height:31px;background:#ffffff;border:1px solid #8f8f8f;box-sizing:border-box;border-radius:4px;"></div>
<svg class="a" style="left:1002px;top:220px;" width="16" height="16" viewBox="0 0 16 16"><circle cx="8" cy="8" r="7.8" fill="#f9b800"/><rect x="4.3" y="4.3" width="7.4" height="7.4" rx="0.6" fill="#fff"/></svg>
<svg class="a" style="left:1038px;top:220px;" width="15" height="16" viewBox="0 0 15 16"><path d="M7.5 0.5 L14.5 4.2 V11.8 L7.5 15.5 L0.5 11.8 V4.2 Z" fill="#f39a1e"/><path d="M0.5 4.2 L7.5 8 L14.5 4.2 M7.5 8 V15.5" fill="none" stroke="#fbc66f" stroke-width="0.8"/></svg>
<svg class="a" style="left:1072px;top:220px;" width="16" height="16" viewBox="0 0 16 16"><rect width="16" height="16" fill="#f39a1e"/><path d="M10 3.2 H3.2 V12.8 H10" fill="none" stroke="#fff" stroke-width="1.3"/><path d="M6.4 8 H12.8 M10.8 6 L12.8 8 L10.8 10" fill="none" stroke="#fff" stroke-width="1.1"/></svg>
<svg class="a" style="left:846px;top:252px;" width="397" height="852" viewBox="0 0 397 852"><path d="M49.5 1.5 H347.5 Q395.5 1.5 395.5 49.5 V803.5 Q395.5 850.5 348.5 850.5 H48.5 Q1.5 850.5 1.5 803.5 V49.5 Q1.5 1.5 49.5 1.5 Z" fill="#fff" stroke="#262626" stroke-width="1.2"/><path d="M84 1.5 Q88 1.5 88 5.5 V10 Q88 33 111 33 H285 Q308 33 308 10 V5.5 Q308 1.5 312 1.5 Z" fill="#000"/></svg>
<div class="a" style="left:993px;top:327px;width:104px;height:96px;background:#b7cbe4;border:1px solid #d2d6dc;box-sizing:border-box;"></div>
<div class="t" style="left:1016.20px;top:368.00px;font-size:12.52px;line-height:16px;color:#ffffff;font-weight:bold;letter-spacing:0.413px;">AppLogo</div>
<div class="a" style="left:867px;top:562px;width:355px;height:33px;background:#fff;border:1px solid #e3e3e3;box-sizing:border-box;border-radius:5px;"></div>
<div class="a" style="left:867px;top:613px;width:355px;height:33px;background:#fff;border:1px solid #e3e3e3;box-sizing:border-box;border-radius:5px;"></div>
<div class="a" style="left:867px;top:680px;width:355px;height:33px;background:#fff;border:1px solid #e3e3e3;box-sizing:border-box;border-radius:5px;"></div>
<div class="a" style="left:867px;top:730px;width:254px;height:33px;background:#fff;border:1px solid #e3e3e3;box-sizing:border-box;border-radius:5px;"></div>
<div class="a" style="left:1125.2px;top:727.0px;width:8px;height:8px;border:1.3px solid #3a3a3a;background:#fff;box-sizing:border-box;"></div>
<div class="a" style="left:1125.2px;top:743.2px;width:8px;height:8px;border:1.3px solid #3a3a3a;background:#fff;box-sizing:border-box;"></div>
<div class="a" style="left:1125.2px;top:758.1px;width:8px;height:8px;border:1.3px solid #3a3a3a;background:#fff;box-sizing:border-box;"></div>
<div class="a" style="left:1170.2px;top:727.0px;width:8px;height:8px;border:1.3px solid #3a3a3a;background:#fff;box-sizing:border-box;"></div>
<div class="a" style="left:1170.2px;top:758.1px;width:8px;height:8px;border:1.3px solid #3a3a3a;background:#fff;box-sizing:border-box;"></div>
<div class="a" style="left:1216.8px;top:727.0px;width:8px;height:8px;border:1.3px solid #3a3a3a;background:#fff;box-sizing:border-box;"></div>
<div class="a" style="left:1216.8px;top:743.2px;width:8px;height:8px;border:1.3px solid #3a3a3a;background:#fff;box-sizing:border-box;"></div>
<div class="a" style="left:1216.8px;top:758.1px;width:8px;height:8px;border:1.3px solid #3a3a3a;background:#fff;box-sizing:border-box;"></div>
<div class="t" style="left:1155.00px;top:738.00px;font-size:13.14px;line-height:17px;color:#2f86f0;letter-spacing:0.333px;">Button</div>
<div class="t" style="left:1024.70px;top:927.00px;font-size:12.98px;line-height:17px;color:#2f86f0;letter-spacing:0.329px;">Button</div>
<div class="a" style="left:975px;top:1091px;width:140px;height:5px;background:#000;border-radius:3px;"></div>
<svg class="a" style="left:750px;top:662px;" width="98" height="34" viewBox="0 0 98 34"><defs><linearGradient id="ag" x1="0" x2="1"><stop offset="0" stop-color="#8a8a8a" stop-opacity="0"/><stop offset="0.35" stop-color="#8a8a8a"/><stop offset="1" stop-color="#8a8a8a"/></linearGradient></defs><rect x="2" y="15.7" width="91" height="2" fill="url(#ag)"/><path d="M78 1.2 L94 16.7 L78 32.4" fill="none" stroke="#8a8a8a" stroke-width="2"/></svg>
<div class="a" style="left:1351px;top:193px;width:143px;height:257px;background:#dedede;border:1px solid #c4c4c4;box-sizing:border-box;border-radius:11px;box-shadow:0 3px 16px rgba(0,0,0,0.16);"></div>
<div class="a" style="left:1352px;top:428px;width:141px;height:21px;background:#d3d3d3;border-top:1px solid #bdbdbd;border-radius:0 0 10px 10px;"></div>
<div class="a" style="left:1371px;top:214px;width:99px;height:212px;background:#fff;border-radius:10px;"></div>
<div class="a" style="left:1393px;top:214px;width:55px;height:8px;background:#000;border-radius:0 0 5px 5px;"></div>
<div class="a" style="left:1407px;top:232px;width:27px;height:25px;background:#b7cbe4;"></div>
<div class="t" style="left:1413.00px;top:243.00px;font-size:3.80px;line-height:5px;color:#ffffff;font-weight:bold;letter-spacing:0.125px;">AppLogo</div>
<div class="a" style="left:1375px;top:290px;width:90px;height:9px;background:#fff;border:1px dashed #f0f0f0;box-sizing:border-box;border-radius:1px;"></div>
<div class="a" style="left:1375px;top:303px;width:90px;height:9px;background:#fff;border:1px dashed #f0f0f0;box-sizing:border-box;border-radius:1px;"></div>
<div class="a" style="left:1375px;top:320px;width:90px;height:9px;background:#fff;border:1px dashed #f0f0f0;box-sizing:border-box;border-radius:1px;"></div>
<div class="a" style="left:1375px;top:333px;width:65px;height:8px;background:#fff;border:1px dashed #f0f0f0;box-sizing:border-box;border-radius:1px;"></div>
<div class="t" style="left:1448.00px;top:336.00px;font-size:3.80px;line-height:5px;color:#2f86f0;letter-spacing:0.096px;">Button</div>
<div class="t" style="left:1416.00px;top:383.00px;font-size:3.80px;line-height:5px;color:#2f86f0;letter-spacing:0.096px;">Button</div>
<svg class="a" style="left:680px;top:1121px;" width="18" height="18" viewBox="0 0 18 18"><rect x="1" y="1" width="16" height="16" rx="2.5" fill="none" stroke="#6e6e6e" stroke-width="1.4"/><rect x="3.6" y="3.6" width="3.2" height="10.8" rx="0.6" fill="#6e6e6e"/></svg>
<svg class="a" style="left:708px;top:1121px;" width="19" height="19" viewBox="0 0 19 19"><circle cx="9.5" cy="9.5" r="8.6" fill="none" stroke="#6e6e6e" stroke-width="1.4"/><circle cx="9.5" cy="5" r="1.4" fill="#6e6e6e"/><path d="M5 7.6 H14 M9.5 7.6 V11.2 L7.2 15.4 M9.5 11.2 L11.8 15.4" fill="none" stroke="#6e6e6e" stroke-width="1.3"/></svg>
<svg class="a" style="left:741px;top:1121px;" width="18" height="18" viewBox="0 0 18 18"><circle cx="9" cy="9" r="8" fill="none" stroke="#6e6e6e" stroke-width="1.5"/><path d="M9 1 A8 8 0 0 0 9 17 Z" fill="#6e6e6e"/><circle cx="9" cy="9" r="4" fill="#6e6e6e"/><path d="M9 5 A4 4 0 0 1 9 13 Z" fill="#fbfbfb"/></svg>
<svg class="a" style="left:775px;top:1119px;" width="19" height="21" viewBox="0 0 19 21"><rect x="1" y="8" width="11" height="12" rx="1.5" fill="none" stroke="#6e6e6e" stroke-width="1.4"/><path d="M11 1.5 Q17 2 17.5 8.5 M15.4 6.6 L17.5 8.8 L19 6.4 M10.8 0.5 L13.2 1.6 L11.6 3.6" fill="none" stroke="#6e6e6e" stroke-width="1.3"/></svg>
<svg class="a" style="left:809px;top:1121px;" width="17" height="18" viewBox="0 0 17 18"><rect x="1" y="1" width="15" height="16" rx="2" fill="none" stroke="#c6c6c6" stroke-width="1.4"/><path d="M8.5 1 V17" stroke="#c6c6c6" stroke-width="1.4"/></svg>
<svg class="a" style="left:845px;top:1120px;" width="12" height="20" viewBox="0 0 12 20"><rect x="1" y="1" width="10" height="18" rx="2.4" fill="none" stroke="#6e6e6e" stroke-width="1.4"/><path d="M4.5 2.6 H7.5" stroke="#6e6e6e" stroke-width="1"/></svg>
<div class="t" style="left:875.20px;top:1122.00px;font-size:13.12px;line-height:17px;color:#555555;letter-spacing:0.34px;">iPhone 11</div>
<svg class="a" style="left:1041px;top:1120px;" width="20" height="20" viewBox="0 0 20 20"><circle cx="8" cy="8" r="6.8" fill="none" stroke="#6e6e6e" stroke-width="1.5"/><path d="M4.8 8 H11.2 M13 13 L18.6 18.6" stroke="#6e6e6e" stroke-width="1.6"/></svg>
<div class="t" style="left:1079.10px;top:1122.00px;font-size:14.00px;line-height:18px;color:#555555;letter-spacing:0.492px;">75%</div>
<svg class="a" style="left:1126px;top:1120px;" width="20" height="20" viewBox="0 0 20 20"><circle cx="8" cy="8" r="6.8" fill="none" stroke="#6e6e6e" stroke-width="1.5"/><path d="M4.8 8 H11.2 M8 4.8 V11.2 M13 13 L18.6 18.6" stroke="#6e6e6e" stroke-width="1.6"/></svg>
<svg class="a" style="left:1352px;top:1120px;" width="20" height="20" viewBox="0 0 20 20"><path d="M1 6 V1 H6 M14 1 H19 V6 M19 14 V19 H14 M6 19 H1 V14" fill="none" stroke="#6e6e6e" stroke-width="1.5"/><path d="M6 10 A4 4 0 0 1 13.5 8 M14 10 A4 4 0 0 1 6.5 12 M12 6.6 L13.8 8.2 L15.2 6 M8 13.4 L6.2 11.8 L4.8 14" fill="none" stroke="#6e6e6e" stroke-width="1.3"/></svg>
<svg class="a" style="left:1384px;top:1120px;" width="19" height="19" viewBox="0 0 19 19"><path d="M1.5 1 V18" stroke="#6e6e6e" stroke-width="1.5"/><rect x="4" y="3.4" width="9" height="5" rx="1" fill="none" stroke="#6e6e6e" stroke-width="1.4"/><rect x="4" y="11" width="14" height="5" rx="1" fill="none" stroke="#6e6e6e" stroke-width="1.4"/></svg>
<svg class="a" style="left:1417px;top:1120px;" width="19" height="20" viewBox="0 0 19 20"><rect x="5" y="5.5" width="9" height="9" rx="1" fill="none" stroke="#6e6e6e" stroke-width="1.4"/><path d="M9.5 1 V5.5 M9.5 14.5 V19 M1 10 H5 M14 10 H18 M1 7.6 V12.4 M18 7.6 V12.4 M7.2 1 H11.8 M7.2 19 H11.8" stroke="#6e6e6e" stroke-width="1.3"/></svg>
<svg class="a" style="left:1450px;top:1120px;" width="20" height="19" viewBox="0 0 20 19"><path d="M10 4.6 L15.4 15 H4.6 Z" fill="none" stroke="#6e6e6e" stroke-width="1.4"/><path d="M1 10 H4 M16 10 H19 M1 8 V12 M19 8 V12" stroke="#6e6e6e" stroke-width="1.3"/><circle cx="10" cy="11.4" r="1.3" fill="#6e6e6e"/></svg>
<svg class="a" style="left:1485px;top:1119px;" width="20" height="20" viewBox="0 0 20 20"><path d="M6 4 H1.5 V18.5 H18.5 V4 H14" fill="none" stroke="#6e6e6e" stroke-width="1.5"/><path d="M10 1 V12.5 M6 8.6 L10 12.6 L14 8.6" fill="none" stroke="#6e6e6e" stroke-width="1.5"/></svg>
<svg class="a" style="left:430px;top:1162px;" width="20" height="12" viewBox="0 0 20 12"><path d="M2 0 H14 Q15.2 0 16 1 L19.4 5 Q20 6 19.4 7 L16 11 Q15.2 12 14 12 H2 Q0 12 0 10 V2 Q0 0 2 0 Z" fill="#1a7cf5"/></svg>
<div class="a" style="left:459px;top:1161px;width:1px;height:15px;background:#d8d8d8;"></div>
<svg class="a" style="left:472px;top:1158px;" width="14" height="19" viewBox="0 0 14 19"><rect x="1" y="1" width="3.6" height="17" rx="1.8" fill="none" stroke="#6e6e6e" stroke-width="1.4"/><rect x="9.4" y="1" width="3.6" height="17" rx="1.8" fill="none" stroke="#6e6e6e" stroke-width="1.4"/></svg>
<svg class="a" style="left:508px;top:1159px;" width="19" height="18" viewBox="0 0 19 18"><path d="M1 9 L8 3 L13.4 7.4" fill="none" stroke="#b2b2b2" stroke-width="1.3"/><path d="M10 4.6 L17.4 11.6 M17.6 7.6 V11.8 H13.4" fill="none" stroke="#b2b2b2" stroke-width="1.3"/><rect x="3" y="14" width="10" height="3" rx="0.6" fill="none" stroke="#b2b2b2" stroke-width="1.2"/></svg>
<svg class="a" style="left:548px;top:1158px;" width="14" height="19" viewBox="0 0 14 19"><path d="M7 1 V11 M3 7.4 L7 11.4 L11 7.4" fill="none" stroke="#b2b2b2" stroke-width="1.3"/><rect x="1.6" y="14.6" width="10.8" height="3" rx="0.6" fill="none" stroke="#b2b2b2" stroke-width="1.2"/></svg>
<svg class="a" style="left:586px;top:1158px;" width="14" height="19" viewBox="0 0 14 19"><path d="M7 12 V1.4 M3 5.2 L7 1.2 L11 5.2" fill="none" stroke="#b2b2b2" stroke-width="1.3"/><rect x="1.6" y="14.6" width="10.8" height="3" rx="0.6" fill="none" stroke="#b2b2b2" stroke-width="1.2"/></svg>
<div class="a" style="left:612px;top:1161px;width:1px;height:15px;background:#d8d8d8;"></div>
<svg class="a" style="left:624px;top:1158px;" width="16" height="19" viewBox="0 0 16 19"><g fill="none" stroke="#6e6e6e" stroke-width="1.2"><path d="M6 6 L14.6 3.6 V14.6 L6 17.4 Z"/><path d="M6 6 L3.6 4.6 M3.4 15.6 V4.4 L11.6 2 M1 13.8 V3.2 L9 1"/></g></svg>
<svg class="a" style="left:662px;top:1158px;" width="17" height="19" viewBox="0 0 17 19"><g fill="none" stroke="#6e6e6e" stroke-width="1.3"><circle cx="3.2" cy="3.2" r="2.2"/><circle cx="3.2" cy="15.6" r="2.2"/><circle cx="13.8" cy="9.4" r="2.2"/><path d="M5.2 4.4 L11.8 8.2 M5.2 14.4 L11.8 10.6"/></g></svg>
<svg class="a" style="left:700px;top:1158px;" width="17" height="19" viewBox="0 0 17 19"><g fill="none" stroke="#6e6e6e" stroke-width="1.3"><rect x="1" y="1.2" width="15" height="6.6" rx="3.3"/><rect x="1" y="11.2" width="15" height="6.6" rx="3.3"/></g><circle cx="4.6" cy="4.5" r="1.8" fill="#6e6e6e"/><circle cx="12.4" cy="14.5" r="1.8" fill="#6e6e6e"/></svg>
<svg class="a" style="left:738px;top:1158px;" width="17" height="18" viewBox="0 0 17 18"><path d="M16 1 L1 7.6 L8.6 9.4 L10.4 17 Z" fill="none" stroke="#6e6e6e" stroke-width="1.3" stroke-linejoin="round"/></svg>
<div class="a" style="left:765px;top:1161px;width:1px;height:15px;background:#d8d8d8;"></div>
<svg class="a" style="left:775px;top:1157px;" width="20" height="20" viewBox="0 0 20 20"><rect x="1" y="1" width="18" height="18" rx="4" fill="none" stroke="#c9ccd0" stroke-width="1.4"/><path d="M5 1 V19 M10 1 V19 M15 1 V19 M1 5 H19 M1 10 H19 M1 15 H19" stroke="#d4d6da" stroke-width="0.8"/></svg>
<div class="t" style="left:800.50px;top:1159.00px;font-size:13.59px;line-height:18px;color:#2a2a2a;letter-spacing:0.433px;">GuardDemo</div>
<svg class="a" style="left:1485px;top:1158px;" width="19" height="19" viewBox="0 0 19 19"><rect x="1" y="1" width="17" height="17" rx="3" fill="none" stroke="#6e6e6e" stroke-width="1.4"/><rect x="3.6" y="11" width="11.8" height="4.4" rx="0.6" fill="#6e6e6e"/></svg>
<svg class="a" style="left:1564px;top:106px;" width="15" height="17" viewBox="0 0 15 17"><path d="M1.8 2.4 Q1.8 1 3.2 1 H8.6 L13.6 6 V14.8 Q13.6 16 12.4 16 H3.2 Q1.8 16 1.8 14.8 Z M8.6 1 V6 H13.6" fill="none" stroke="#6e6e6e" stroke-width="1.4" stroke-linejoin="round"/></svg>
<svg class="a" style="left:1600px;top:106px;" width="18" height="17" viewBox="0 0 18 17"><circle cx="9" cy="8.5" r="7.6" fill="none" stroke="#6e6e6e" stroke-width="1.5"/><path d="M9 4 V9 H5.6" fill="none" stroke="#6e6e6e" stroke-width="1.5"/></svg>
<svg class="a" style="left:1638px;top:106px;" width="18" height="17" viewBox="0 0 18 17"><circle cx="9" cy="8.5" r="7.6" fill="none" stroke="#6e6e6e" stroke-width="1.5"/><path d="M6.6 6.6 Q6.6 4.2 9 4.2 Q11.4 4.2 11.4 6.4 Q11.4 8 9.2 9 V10.6" fill="none" stroke="#6e6e6e" stroke-width="1.4"/><circle cx="9.1" cy="12.6" r="0.9" fill="#6e6e6e"/></svg>
<svg class="a" style="left:1676px;top:107px;" width="17" height="15" viewBox="0 0 17 15"><rect width="17" height="15" rx="2.4" fill="#1a7cf5"/><rect x="2.6" y="2.8" width="6" height="5.6" fill="#fff"/><path d="M10.4 3.4 H14.6 M10.4 6 H14.6 M10.4 8.6 H14.6 M2.6 11.6 H14.6" stroke="#fff" stroke-width="1.3"/></svg>
<svg class="a" style="left:1714px;top:106px;" width="18" height="17" viewBox="0 0 18 17"><path d="M1 2.6 H17 M1 8.5 H17 M1 14.4 H17" stroke="#6e6e6e" stroke-width="1.4"/><circle cx="12.4" cy="2.6" r="1.8" fill="#f4efef" stroke="#6e6e6e" stroke-width="1.2"/><circle cx="5" cy="8.5" r="1.8" fill="#f4efef" stroke="#6e6e6e" stroke-width="1.2"/><circle cx="12.4" cy="14.4" r="1.8" fill="#f4efef" stroke="#6e6e6e" stroke-width="1.2"/></svg>
<svg class="a" style="left:1752px;top:107px;" width="16" height="16" viewBox="0 0 16 16"><path d="M1.2 1 L15 15 H1.2 Z" fill="none" stroke="#6e6e6e" stroke-width="1.5" stroke-linejoin="round"/><path d="M4.4 7.4 L9.2 12.2 H4.4 Z" fill="none" stroke="#6e6e6e" stroke-width="1.3"/></svg>
<svg class="a" style="left:1790px;top:106px;" width="17" height="17" viewBox="0 0 17 17"><path d="M13.2 3.4 A7 7 0 1 0 13.2 13.6" fill="none" stroke="#6e6e6e" stroke-width="1.5"/><circle cx="8.4" cy="8.5" r="2.8" fill="#6e6e6e"/><path d="M8.4 8.5 H17" stroke="#6e6e6e" stroke-width="1.5"/></svg>
<div class="t" style="left:1529.70px;top:139.00px;font-size:14.80px;line-height:19px;color:#7a7a7a;font-weight:bold;letter-spacing:0.433px;">Custom Class</div>
<div class="a" style="left:1573px;top:166px;width:272px;height:60px;border:2px solid #fa2a12;box-sizing:border-box;"></div>
<div class="t" style="right:299.40px;top:174.00px;font-size:12.73px;line-height:17px;color:#2a2a2a;letter-spacing:0.335px;">Class</div>
<div class="a" style="left:1627.5px;top:170.5px;width:212px;height:20px;background:#fff;border-radius:4px;box-shadow:0 0.5px 1.5px rgba(0,0,0,0.3);"></div>
<div class="t" style="left:1631.80px;top:172.00px;font-size:14.19px;line-height:18px;color:#2a2a2a;letter-spacing:0.369px;">GetVerifyCodeButton</div>
<svg class="a" style="left:1801px;top:174px;" width="14" height="14" viewBox="0 0 14 14"><circle cx="7" cy="7" r="6.6" fill="#6e6e6e"/><path d="M3.4 7 H10.2 M7.4 4.2 L10.2 7 L7.4 9.8" fill="none" stroke="#fff" stroke-width="1.3"/></svg>
<svg class="a" style="left:1822.6px;top:172.6px;" width="15" height="15" viewBox="0 0 15 15"><rect width="15" height="15" rx="3.5" fill="#1a7cf5"/><path d="M4.4 6 L7.5 9.2 L10.6 6" fill="none" stroke="#fff" stroke-width="1.5"/></svg>
<div class="t" style="right:299.40px;top:202.00px;font-size:12.73px;line-height:17px;color:#2a2a2a;letter-spacing:0.366px;">Module</div>
<div class="a" style="left:1624px;top:194.5px;width:218px;height:27px;background:#8fb3f3;border-radius:7px;"></div>
<div class="a" style="left:1627.5px;top:197.5px;width:211.5px;height:21px;background:#fff;border-radius:4px;"></div>
<div class="t" style="left:1631.80px;top:201.00px;font-size:13.19px;line-height:17px;color:#2a2a2a;letter-spacing:0.386px;">Guard</div>
<div class="a" style="left:1671px;top:200px;width:1.2px;height:17px;background:#111;"></div>
<svg class="a" style="left:1822.6px;top:200.4px;" width="15" height="15" viewBox="0 0 15 15"><rect width="15" height="15" rx="3.5" fill="#1a7cf5"/><path d="M4.4 6 L7.5 9.2 L10.6 6" fill="none" stroke="#fff" stroke-width="1.5"/></svg>
<div class="a" style="left:1627px;top:228px;width:15px;height:15px;background:#ffffff;border-radius:3.2px;box-shadow:0 0 0 0.6px rgba(0,0,0,0.12),0 0.6px 1.2px rgba(0,0,0,0.25);"></div>
<div class="t" style="left:1647.10px;top:227.00px;font-size:14.13px;line-height:18px;color:#2a2a2a;letter-spacing:0.343px;">Inherit Module From Target</div>
<div class="a" style="left:1530px;top:262px;width:309px;height:1px;background:#dcd8d8;"></div>
<div class="t" style="left:1529.90px;top:270.00px;font-size:15.47px;line-height:20px;color:#7a7a7a;font-weight:bold;letter-spacing:0.362px;">Identity</div>
<div class="t" style="right:299.20px;top:306.00px;font-size:12.73px;line-height:17px;color:#2a2a2a;letter-spacing:0.306px;">Restoration ID</div>
<div class="a" style="left:1628px;top:303.7px;width:211px;height:21px;background:#ffffff;border-radius:0.5px;box-shadow:0 1px 0 #c6c6c6,0 0 0 0.5px rgba(0,0,0,0.10);"></div>
<div class="a" style="left:1530px;top:341px;width:309px;height:1px;background:#dcd8d8;"></div>
<div class="t" style="left:1529.90px;top:348.00px;font-size:15.22px;line-height:20px;color:#7a7a7a;font-weight:bold;letter-spacing:0.398px;">User Defined Runtime Attributes</div>
<div class="a" style="left:1531px;top:375px;width:308px;height:122px;background:#fff;border:1px solid #c9c9c9;box-sizing:border-box;"></div>
<div class="a" style="left:1532px;top:410px;width:306px;height:1px;background:#e6e6e6;"></div>
<div class="t" style="left:1542.10px;top:385.00px;font-size:13.41px;line-height:17px;color:#2a2a2a;letter-spacing:0.358px;">Key Path</div>
<div class="a" style="left:1698px;top:383px;width:1px;height:20px;background:#dedede;"></div>
<div class="t" style="left:1704.10px;top:385.00px;font-size:13.36px;line-height:17px;color:#2a2a2a;letter-spacing:0.381px;">Type</div>
<div class="a" style="left:1784px;top:383px;width:1px;height:20px;background:#dedede;"></div>
<div class="t" style="left:1789.50px;top:385.00px;font-size:12.84px;line-height:17px;color:#2a2a2a;letter-spacing:0.248px;">Val...</div>
<svg class="a" style="left:1538px;top:478px;" width="14" height="14" viewBox="0 0 14 14"><path d="M7 0.5 V13.5 M0.5 7 H13.5" stroke="#555" stroke-width="1.4"/></svg>
<svg class="a" style="left:1563px;top:484px;" width="14" height="2" viewBox="0 0 14 2"><path d="M0.5 1 H13.5" stroke="#c4c4c4" stroke-width="1.4"/></svg>
<div class="a" style="left:1530px;top:507.5px;width:309px;height:1px;background:#dcd8d8;"></div>
<div class="t" style="left:1529.90px;top:516.00px;font-size:14.98px;line-height:19px;color:#7a7a7a;font-weight:bold;letter-spacing:0.482px;">Document</div>
<div class="t" style="right:299.20px;top:551.00px;font-size:12.73px;line-height:17px;color:#2a2a2a;letter-spacing:0.328px;">Label</div>
<div class="a" style="left:1627.5px;top:548.5px;width:212px;height:20.5px;background:#ffffff;border-radius:0.5px;box-shadow:0 1px 0 #c6c6c6,0 0 0 0.5px rgba(0,0,0,0.10);"></div>
<div class="t" style="left:1632.20px;top:551.00px;font-size:13.96px;line-height:18px;color:#bdbdbd;letter-spacing:0.343px;">Xcode Specific Label</div>
<svg class="a" style="left:1631px;top:582px;" width="10" height="10" viewBox="0 0 10 10"><path d="M1 1 L9 9 M9 1 L1 9" stroke="#333" stroke-width="1.6"/></svg>
<div class="a" style="left:1650.3px;top:580.4px;width:11.4px;height:10.4px;background:#f3a195;border-radius:2.5px;"></div>
<div class="a" style="left:1672.6px;top:580.4px;width:11.4px;height:10.4px;background:#f6c283;border-radius:2.5px;"></div>
<div class="a" style="left:1695.2px;top:580.4px;width:11.4px;height:10.4px;background:#f8dc83;border-radius:2.5px;"></div>
<div class="a" style="left:1718px;top:580.4px;width:11.4px;height:10.4px;background:#cbe39c;border-radius:2.5px;"></div>
<div class="a" style="left:1740.7px;top:580.4px;width:11.4px;height:10.4px;background:#a3caf4;border-radius:2.5px;"></div>
<div class="a" style="left:1763.3px;top:580.4px;width:11.4px;height:10.4px;background:#d6b8ee;border-radius:2.5px;"></div>
<div class="a" style="left:1786.4px;top:580.4px;width:11.4px;height:10.4px;background:#d2d2d2;border-radius:2.5px;"></div>
<div class="t" style="right:299.20px;top:604.00px;font-size:12.73px;line-height:17px;color:#2a2a2a;letter-spacing:0.31px;">Object ID</div>
<div class="t" style="left:1629.60px;top:605.00px;font-size:13.85px;line-height:18px;color:#2a2a2a;letter-spacing:0.405px;">CnL-7R-w5x</div>
<div class="t" style="right:299.20px;top:629.00px;font-size:12.73px;line-height:17px;color:#2a2a2a;letter-spacing:0.354px;">Lock</div>
<div class="a" style="left:1627.5px;top:627px;width:212px;height:21px;background:#fff;border-radius:5px;box-shadow:0 0.5px 1.5px rgba(0,0,0,0.3);"></div>
<div class="t" style="left:1635.40px;top:628.00px;font-size:14.48px;line-height:19px;color:#2a2a2a;letter-spacing:0.323px;">Inherited - (Nothing)</div>
<svg class="a" style="left:1822.2px;top:628.8px;" width="16" height="16" viewBox="0 0 16 16"><rect width="16" height="16" rx="3.5" fill="#1a7cf5"/><path d="M5 6.4 L8 3.6 L11 6.4 M5 9.6 L8 12.4 L11 9.6" fill="none" stroke="#fff" stroke-width="1.4"/></svg>
<div class="t" style="right:299.20px;top:658.00px;font-size:12.73px;line-height:17px;color:#2a2a2a;letter-spacing:0.29px;">Localizer Hint</div>
<div class="a" style="left:1627.5px;top:656.2px;width:212px;height:20px;background:#ffffff;border-radius:0.5px;box-shadow:0 1px 0 #c6c6c6,0 0 0 0.5px rgba(0,0,0,0.10);"></div>
<div class="t" style="left:1632.20px;top:658.00px;font-size:13.96px;line-height:18px;color:#bdbdbd;letter-spacing:0.364px;">Comment For Localizer</div>
<div class="a" style="left:1530px;top:692.5px;width:309px;height:1px;background:#dcd8d8;"></div>
<div class="t" style="left:1529.90px;top:701.00px;font-size:14.95px;line-height:19px;color:#7a7a7a;font-weight:bold;letter-spacing:0.37px;">Accessibility</div>
<div class="t" style="right:299.20px;top:732.00px;font-size:12.73px;line-height:17px;color:#2a2a2a;letter-spacing:0.281px;">Accessibility</div>
<svg class="a" style="left:1628.3px;top:733.2px;" width="15" height="15" viewBox="0 0 15 15"><rect x="0" y="0" width="15" height="15" rx="3.2" fill="#1a7cf5"/><path d="M3.4 7.8 L6.2 10.8 L11.6 3.8" fill="none" stroke="#fff" stroke-width="1.7" stroke-linecap="round" stroke-linejoin="round"/></svg>
<div class="t" style="left:1648.70px;top:732.00px;font-size:13.49px;line-height:18px;color:#2a2a2a;letter-spacing:0.372px;">Enabled</div>
<div class="t" style="right:299.20px;top:759.00px;font-size:12.73px;line-height:17px;color:#2a2a2a;letter-spacing:0.328px;">Label</div>
<div class="a" style="left:1627.5px;top:757.1px;width:212px;height:20px;background:#ffffff;border-radius:0.5px;box-shadow:0 1px 0 #c6c6c6,0 0 0 0.5px rgba(0,0,0,0.10);"></div>
<div class="t" style="left:1632.20px;top:759.00px;font-size:13.96px;line-height:18px;color:#bdbdbd;letter-spacing:0.36px;">Label</div>
<div class="t" style="right:299.20px;top:788.00px;font-size:12.73px;line-height:17px;color:#2a2a2a;letter-spacing:0.298px;">Hint</div>
<div class="a" style="left:1627.5px;top:786.4px;width:212px;height:20px;background:#ffffff;border-radius:0.5px;box-shadow:0 1px 0 #c6c6c6,0 0 0 0.5px rgba(0,0,0,0.10);"></div>
<div class="t" style="left:1632.20px;top:788.00px;font-size:13.96px;line-height:18px;color:#bdbdbd;letter-spacing:0.327px;">Hint</div>
<div class="t" style="right:299.20px;top:817.00px;font-size:12.73px;line-height:17px;color:#2a2a2a;letter-spacing:0.257px;">Identifier</div>
<div class="a" style="left:1627.5px;top:815.6px;width:212px;height:20px;background:#ffffff;border-radius:0.5px;box-shadow:0 1px 0 #c6c6c6,0 0 0 0.5px rgba(0,0,0,0.10);"></div>
<div class="t" style="left:1632.20px;top:817.00px;font-size:13.96px;line-height:18px;color:#bdbdbd;letter-spacing:0.282px;">Identifier</div>
<div class="a" style="left:1530px;top:841.5px;width:309px;height:1px;background:#dcd8d8;"></div>
<div class="t" style="right:299.20px;top:848.00px;font-size:12.73px;line-height:17px;color:#2a2a2a;letter-spacing:0.275px;">Traits</div>
<svg class="a" style="left:1628.3px;top:848.6999999999999px;" width="15" height="15" viewBox="0 0 15 15"><rect x="0" y="0" width="15" height="15" rx="3.2" fill="#1a7cf5"/><path d="M3.4 7.8 L6.2 10.8 L11.6 3.8" fill="none" stroke="#fff" stroke-width="1.7" stroke-linecap="round" stroke-linejoin="round"/></svg>
<div class="t" style="left:1648.50px;top:848.00px;font-size:14.06px;line-height:18px;color:#2a2a2a;letter-spacing:0.357px;">Button</div>
<div class="a" style="left:1628.3px;top:871.4399999999999px;width:15px;height:15px;background:#ffffff;border-radius:3.2px;box-shadow:0 0 0 0.6px rgba(0,0,0,0.12),0 0.6px 1.2px rgba(0,0,0,0.25);"></div>
<div class="t" style="left:1648.50px;top:871.00px;font-size:14.06px;line-height:18px;color:#2a2a2a;letter-spacing:0.411px;">Image</div>
<div class="a" style="left:1628.3px;top:894.18px;width:15px;height:15px;background:#ffffff;border-radius:3.2px;box-shadow:0 0 0 0.6px rgba(0,0,0,0.12),0 0.6px 1.2px rgba(0,0,0,0.25);"></div>
<div class="t" style="left:1648.50px;top:893.00px;font-size:14.06px;line-height:18px;color:#2a2a2a;letter-spacing:0.309px;">Static Text</div>
<div class="a" style="left:1628.3px;top:916.92px;width:15px;height:15px;background:#ffffff;border-radius:3.2px;box-shadow:0 0 0 0.6px rgba(0,0,0,0.12),0 0.6px 1.2px rgba(0,0,0,0.25);"></div>
<div class="t" style="left:1648.50px;top:916.00px;font-size:14.06px;line-height:18px;color:#2a2a2a;letter-spacing:0.346px;">Search Field</div>
<div class="a" style="left:1628.3px;top:939.66px;width:15px;height:15px;background:#ffffff;border-radius:3.2px;box-shadow:0 0 0 0.6px rgba(0,0,0,0.12),0 0.6px 1.2px rgba(0,0,0,0.25);"></div>
<div class="t" style="left:1648.50px;top:939.00px;font-size:14.06px;line-height:18px;color:#2a2a2a;letter-spacing:0.378px;">Plays Sound</div>
<div class="a" style="left:1628.3px;top:962.4px;width:15px;height:15px;background:#ffffff;border-radius:3.2px;box-shadow:0 0 0 0.6px rgba(0,0,0,0.12),0 0.6px 1.2px rgba(0,0,0,0.25);"></div>
<div class="t" style="left:1648.50px;top:961.00px;font-size:14.06px;line-height:18px;color:#2a2a2a;letter-spacing:0.387px;">Keyboard Key</div>
<div class="a" style="left:1628.3px;top:985.14px;width:15px;height:15px;background:#ffffff;border-radius:3.2px;box-shadow:0 0 0 0.6px rgba(0,0,0,0.12),0 0.6px 1.2px rgba(0,0,0,0.25);"></div>
<div class="t" style="left:1648.50px;top:984.00px;font-size:14.06px;line-height:18px;color:#2a2a2a;letter-spacing:0.406px;">Summary Element</div>
<svg class="a" style="left:1628.3px;top:1007.8799999999999px;" width="15" height="15" viewBox="0 0 15 15"><rect x="0" y="0" width="15" height="15" rx="3.2" fill="#1a7cf5"/><path d="M3.4 7.8 L6.2 10.8 L11.6 3.8" fill="none" stroke="#fff" stroke-width="1.7" stroke-linecap="round" stroke-linejoin="round"/></svg>
<div class="t" style="left:1648.50px;top:1007.00px;font-size:14.06px;line-height:18px;color:#2a2a2a;letter-spacing:0.339px;">User Interaction Enabled</div>
<div class="a" style="left:1628.3px;top:1030.6200000000001px;width:15px;height:15px;background:#ffffff;border-radius:3.2px;box-shadow:0 0 0 0.6px rgba(0,0,0,0.12),0 0.6px 1.2px rgba(0,0,0,0.25);"></div>
<div class="t" style="left:1648.50px;top:1030.00px;font-size:14.06px;line-height:18px;color:#2a2a2a;letter-spacing:0.359px;">Updates Frequently</div>
<div class="a" style="left:1628.3px;top:1053.3600000000001px;width:15px;height:15px;background:#ffffff;border-radius:3.2px;box-shadow:0 0 0 0.6px rgba(0,0,0,0.12),0 0.6px 1.2px rgba(0,0,0,0.25);"></div>
<div class="t" style="left:1648.50px;top:1052.00px;font-size:14.06px;line-height:18px;color:#2a2a2a;letter-spacing:0.35px;">Starts Media Session</div>
<div class="a" style="left:1628.3px;top:1076.1px;width:15px;height:15px;background:#ffffff;border-radius:3.2px;box-shadow:0 0 0 0.6px rgba(0,0,0,0.12),0 0.6px 1.2px rgba(0,0,0,0.25);"></div>
<div class="t" style="left:1648.50px;top:1075.00px;font-size:14.06px;line-height:18px;color:#2a2a2a;letter-spacing:0.346px;">Adjustable</div>
<div class="a" style="left:1628.3px;top:1098.8400000000001px;width:15px;height:15px;background:#ffffff;border-radius:3.2px;box-shadow:0 0 0 0.6px rgba(0,0,0,0.12),0 0.6px 1.2px rgba(0,0,0,0.25);"></div>
<div class="t" style="left:1648.50px;top:1098.00px;font-size:14.06px;line-height:18px;color:#2a2a2a;letter-spacing:0.317px;">Allows Direct Interaction</div>
<div class="a" style="left:1628.3px;top:1121.58px;width:15px;height:15px;background:#ffffff;border-radius:3.2px;box-shadow:0 0 0 0.6px rgba(0,0,0,0.12),0 0.6px 1.2px rgba(0,0,0,0.25);"></div>
<div class="t" style="left:1648.50px;top:1121.00px;font-size:14.06px;line-height:18px;color:#2a2a2a;letter-spacing:0.383px;">Causes Page Turn</div>
<div class="a" style="left:1628.3px;top:1144.3200000000002px;width:15px;height:15px;background:#ffffff;border-radius:3.2px;box-shadow:0 0 0 0.6px rgba(0,0,0,0.12),0 0.6px 1.2px rgba(0,0,0,0.25);"></div>
<div class="t" style="left:1648.50px;top:1143.00px;font-size:14.06px;line-height:18px;color:#2a2a2a;letter-spacing:0.405px;">Header</div>
<div class="a" style="left:1739.5px;top:848.6999999999999px;width:15px;height:15px;background:#ffffff;border-radius:3.2px;box-shadow:0 0 0 0.6px rgba(0,0,0,0.12),0 0.6px 1.2px rgba(0,0,0,0.25);"></div>
<div class="t" style="left:1759.80px;top:848.00px;font-size:14.06px;line-height:18px;color:#2a2a2a;letter-spacing:0.339px;">Link</div>
<div class="a" style="left:1739.5px;top:871.4399999999999px;width:15px;height:15px;background:#ffffff;border-radius:3.2px;box-shadow:0 0 0 0.6px rgba(0,0,0,0.12),0 0.6px 1.2px rgba(0,0,0,0.25);"></div>
<div class="t" style="left:1759.80px;top:871.00px;font-size:14.06px;line-height:18px;color:#2a2a2a;letter-spacing:0.36px;">Selected</div>
<div class="a" style="left:1530px;top:1176.5px;width:309px;height:1px;background:#dcd8d8;"></div>
</div></body></html>
